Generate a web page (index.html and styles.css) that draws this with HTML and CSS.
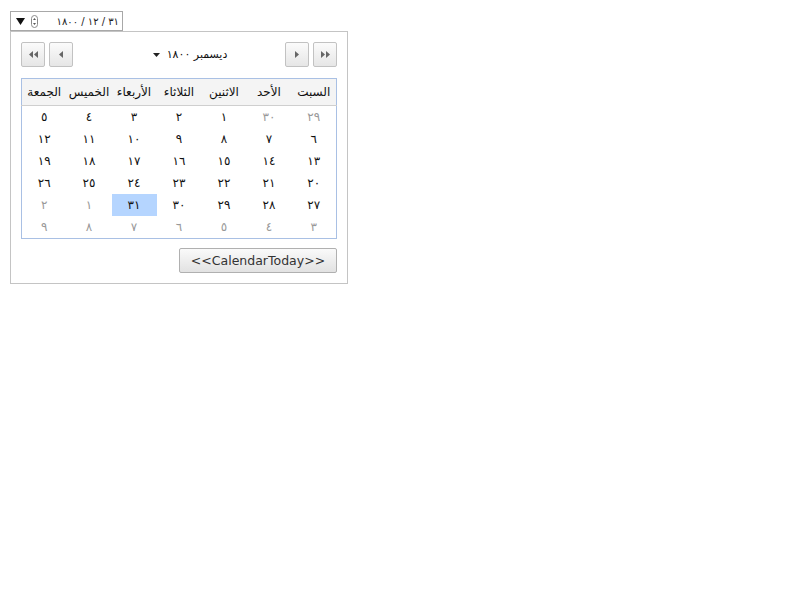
FILE: index.html
```html
<!DOCTYPE html>
<html lang="ar" dir="rtl">
<head>
<meta charset="utf-8">
<link rel="stylesheet" href="styles.css">
</head>
<body>
<div class="picker">
  <div class="field">
    <span class="value">٣١ / ١٢ / ١٨٠٠</span>
    <span class="spin"><svg width="7" height="13" viewBox="0 0 7 13"><rect x="0.5" y="0.5" width="6" height="12" rx="3" fill="#fff" stroke="#8a8a8a"/><path d="M2 5 L3.5 3 L5 5Z M2 8 L3.5 10 L5 8Z" fill="#555"/></svg></span>
    <span class="drop"><svg width="9" height="7" viewBox="0 0 9 7"><path d="M0 0 H9 L4.5 7Z" fill="#111"/></svg></span>
  </div>
  <div class="popup">
    <div class="nav">
      <div class="btns">
        <button class="nb"><svg width="9" height="7" viewBox="0 0 9 7"><path d="M0 0 L4 3.5 L0 7Z M5 0 L9 3.5 L5 7Z" fill="#666"/></svg></button>
        <button class="nb"><svg width="4" height="7" viewBox="0 0 4 7"><path d="M0 0 L4 3.5 L0 7Z" fill="#666"/></svg></button>
      </div>
      <div class="title"><span>ديسمبر ١٨٠٠</span><svg width="7" height="4" viewBox="0 0 7 4"><path d="M0 0 H7 L3.5 4Z" fill="#222"/></svg></div>
      <div class="btns">
        <button class="nb"><svg width="4" height="7" viewBox="0 0 4 7"><path d="M4 0 L0 3.5 L4 7Z" fill="#666"/></svg></button>
        <button class="nb"><svg width="9" height="7" viewBox="0 0 9 7"><path d="M4 0 L0 3.5 L4 7Z M9 0 L5 3.5 L9 7Z" fill="#666"/></svg></button>
      </div>
    </div>
    <table class="grid">
      <thead>
        <tr><th>السبت</th><th>الأحد</th><th>الاثنين</th><th>الثلاثاء</th><th>الأربعاء</th><th>الخميس</th><th>الجمعة</th></tr>
      </thead>
      <tbody>
        <tr><td class="o">٢٩</td><td class="o">٣٠</td><td>١</td><td>٢</td><td>٣</td><td>٤</td><td>٥</td></tr>
        <tr><td>٦</td><td>٧</td><td>٨</td><td>٩</td><td>١٠</td><td>١١</td><td>١٢</td></tr>
        <tr><td>١٣</td><td>١٤</td><td>١٥</td><td>١٦</td><td>١٧</td><td>١٨</td><td>١٩</td></tr>
        <tr><td>٢٠</td><td>٢١</td><td>٢٢</td><td>٢٣</td><td>٢٤</td><td>٢٥</td><td>٢٦</td></tr>
        <tr><td>٢٧</td><td>٢٨</td><td>٢٩</td><td>٣٠</td><td class="sel">٣١</td><td class="o">١</td><td class="o">٢</td></tr>
        <tr><td class="o">٣</td><td class="o">٤</td><td class="o">٥</td><td class="o">٦</td><td class="o">٧</td><td class="o">٨</td><td class="o">٩</td></tr>
      </tbody>
    </table>
    <div class="foot"><button class="today" dir="ltr">&lt;&lt;CalendarToday&gt;&gt;</button></div>
  </div>
</div>
</body>
</html>
```

FILE: styles.css
```css
html, body {
  margin: 0;
  padding: 0;
  background: #fff;
}
body {
  font-family: "DejaVu Sans", sans-serif;
  font-size: 12px;
  color: #111;
}
.picker {
  display: flex;
  flex-direction: column;
  align-items: flex-end;
  padding: 11px 0 0 10px;
}
.field {
  width: 113px;
  height: 20px;
  box-sizing: border-box;
  border: 1px solid #a8a8a8;
  display: flex;
  align-items: center;
  padding: 0 3px 0 5px;
  gap: 6px;
  font-size: 10px;
  color: #222;
}
.field .value { flex: 1; text-align: right; }
.field .spin, .field .drop { display: flex; align-items: center; }
.popup {
  width: 338px;
  box-sizing: border-box;
  border: 1px solid #c4c4c4;
  padding: 10px;
  display: flex;
  flex-direction: column;
}
.nav {
  display: flex;
  align-items: center;
  justify-content: space-between;
  height: 25px;
}
.btns { display: flex; gap: 4px; }
.nb {
  width: 24px;
  height: 25px;
  padding: 0;
  margin: 0;
  border: 1px solid #c2c2c2;
  border-radius: 2px;
  background: linear-gradient(#fbfbfb, #e6e6e6);
  display: flex;
  align-items: center;
  justify-content: center;
}
.title {
  display: flex;
  align-items: center;
  gap: 7px;
  font-size: 11px;
  color: #111;
  margin-left: 22px;
}
.grid {
  margin-top: 11px;
  width: 316px;
  border: 1px solid #a9c0e4;
  border-collapse: collapse;
  table-layout: fixed;
}
.grid th {
  height: 26px;
  padding: 0;
  background: #f4f4f4;
  border-bottom: 1px solid #cfcfcf;
  font-weight: normal;
  font-size: 12px;
  color: #111;
  white-space: nowrap;
}
.grid td {
  height: 22px;
  padding: 0;
  text-align: center;
  font-size: 12px;
  color: #111;
}
.grid td.o { color: #999; }
.grid td.sel { background: #b5d5ff; }
.foot {
  display: flex;
  justify-content: flex-start;
  margin-top: 9px;
}
.today {
  width: 158px;
  height: 25px;
  margin: 0;
  border: 1px solid #b0b0b0;
  border-radius: 2px;
  background: linear-gradient(#fafafa, #e2e2e2);
  font-family: "DejaVu Sans", sans-serif;
  font-size: 12.5px;
  color: #333;
  padding: 0;
}
```
